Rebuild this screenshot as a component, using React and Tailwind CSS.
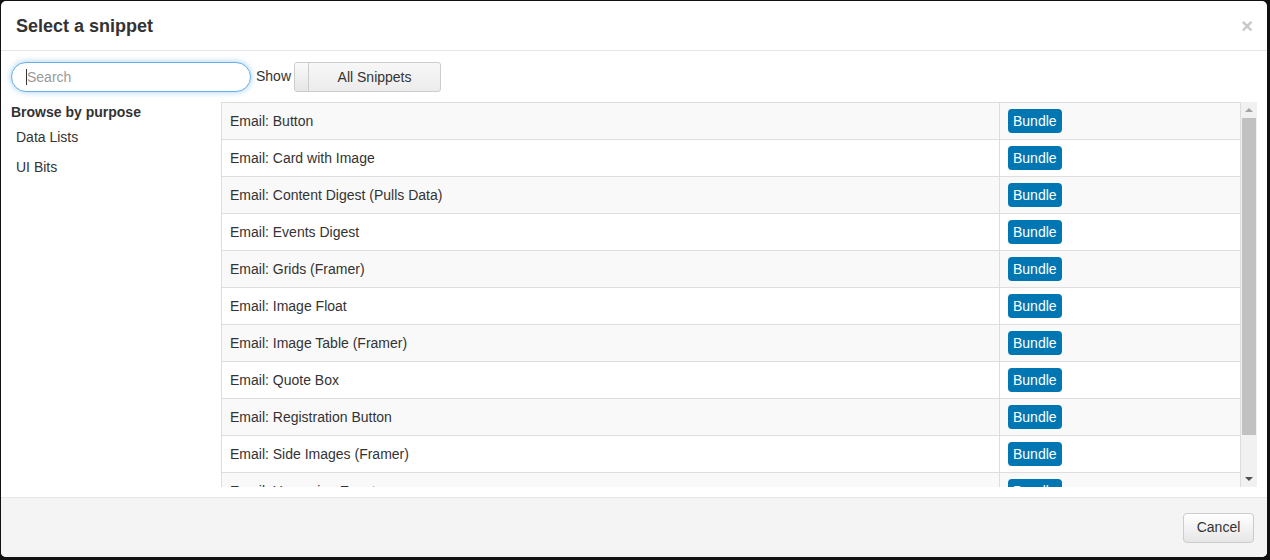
import React from "react";

const snippets = [
  "Email: Button",
  "Email: Card with Image",
  "Email: Content Digest (Pulls Data)",
  "Email: Events Digest",
  "Email: Grids (Framer)",
  "Email: Image Float",
  "Email: Image Table (Framer)",
  "Email: Quote Box",
  "Email: Registration Button",
  "Email: Side Images (Framer)",
  "Email: Upcoming Events",
];

export default function App() {
  return (
    <div className="h-[560px] w-[1270px] overflow-hidden bg-[#111] pt-px pl-px pr-[3px] pb-[3px] font-['Liberation_Sans',Arial,sans-serif] text-[14px] text-[#333]">
      <div className="flex h-full flex-col overflow-hidden rounded-[5px] bg-white">
        {/* header */}
        <div className="flex h-[50px] shrink-0 items-center justify-between border-b border-[#e5e5e5] pl-[15px] pr-[14px]">
          <h4 className="text-[18px] font-bold leading-none">Select a snippet</h4>
          <span className="text-[20px] font-bold leading-none text-[#c8c8c8]">×</span>
        </div>

        {/* body */}
        <div className="flex-1 overflow-hidden pl-[10px] pt-[11px]">
          <div className="flex h-[30px] items-center">
            <div className="flex h-[30px] w-[240px] items-center rounded-full border border-[#66afe9] bg-white pl-[14px] shadow-[0_0_6px_rgba(102,175,233,0.6)]">
              <span className="h-[16px] w-px bg-[#333]" />
              <span className="text-[#999]">Search</span>
            </div>
            <span className="ml-[5px] mb-[2px]">Show</span>
            <div className="ml-[3px] flex h-[30px] w-[147px] overflow-hidden rounded-[3px] border border-[#ccc] bg-gradient-to-b from-[#f7f7f7] to-[#ececec]">
              <div className="w-[14px] border-r border-[#ccc] bg-gradient-to-b from-[#fafafa] to-[#e6e6e6]" />
              <div className="flex flex-1 items-center justify-center">All Snippets</div>
            </div>
          </div>

          <div className="mt-[10px] flex">
            <div className="w-[210px] shrink-0">
              <div className="mt-[2px] font-bold leading-[16px]">Browse by purpose</div>
              <div className="mt-[9px] pl-[5px] leading-[16px]">Data Lists</div>
              <div className="mt-[14px] pl-[5px] leading-[16px]">UI Bits</div>
            </div>

            <div className="flex h-[385px] w-[1036px]">
              <div className="h-full w-[1020px] overflow-hidden">
                <table className="w-full border-collapse border border-[#ddd]">
                  <tbody>
                    {snippets.map((s, i) => (
                      <tr key={s} className={i % 2 === 0 ? "bg-[#f9f9f9]" : "bg-white"}>
                        <td className="h-[37px] w-[778px] border border-[#ddd] px-[8px] leading-[20px]">{s}</td>
                        <td className="h-[37px] border border-[#ddd] px-[8px]">
                          <span className="inline-block rounded-[4px] bg-[#0077b3] px-[5px] py-[2px] leading-[20px] text-white">Bundle</span>
                        </td>
                      </tr>
                    ))}
                  </tbody>
                </table>
              </div>
              <div className="flex h-full w-[16px] flex-col items-center bg-[#f1f1f1]">
                <div className="flex h-[16px] items-center justify-center">
                  <div className="h-0 w-0 border-x-[4px] border-b-[4px] border-x-transparent border-b-[#a3a3a3]" />
                </div>
                <div className="h-[317px] w-[14px] bg-[#c1c1c1]" />
                <div className="flex-1" />
                <div className="flex h-[16px] items-center justify-center">
                  <div className="h-0 w-0 border-x-[4px] border-t-[4px] border-x-transparent border-t-[#505050]" />
                </div>
              </div>
            </div>
          </div>
        </div>

        {/* footer */}
        <div className="flex h-[60px] shrink-0 items-center justify-end border-t border-[#e5e5e5] bg-[#f4f4f4] pr-[13px]">
          <button className="h-[30px] w-[71px] rounded-[4px] border border-[#ccc] bg-gradient-to-b from-white to-[#e6e6e6] text-[14px] text-[#333]">Cancel</button>
        </div>
      </div>
    </div>
  );
}
